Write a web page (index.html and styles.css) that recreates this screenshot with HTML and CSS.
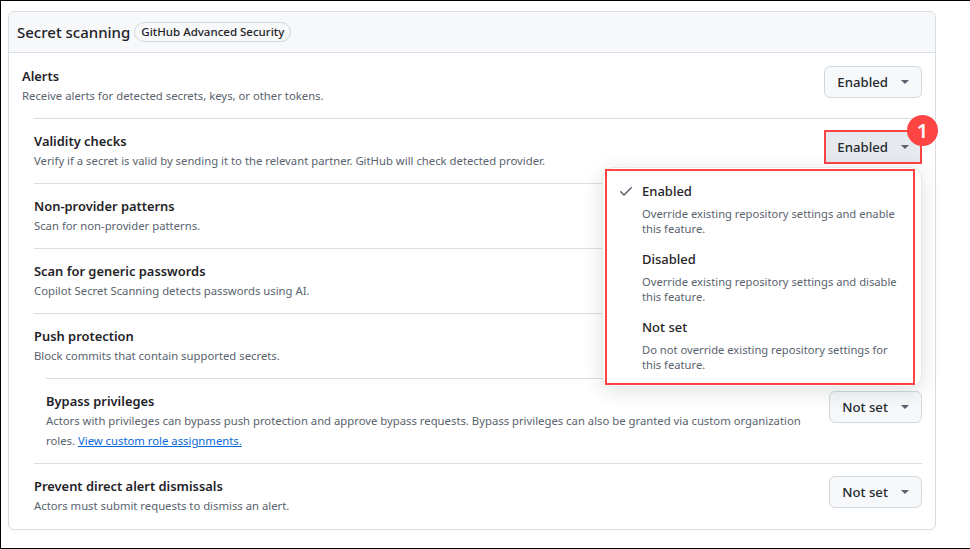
FILE: index.html
```html
<!DOCTYPE html>
<html>
<head>
  <title>Secret scanning</title>
  <link rel="stylesheet" href="styles.css">
</head>
<body>
  <div class="frame">
    <div class="card">
      <div class="card-head">
        <h2>Secret scanning</h2>
        <span class="pill">GitHub Advanced Security</span>
      </div>
      <div class="row">
        <div class="text">
          <h3>Alerts</h3>
          <p>Receive alerts for detected secrets, keys, or other tokens.</p>
        </div>
        <button class="btn">Enabled <span class="caret"></span></button>
      </div>
      <div class="indent">
        <div class="row line">
          <div class="text">
            <h3>Validity checks</h3>
            <p>Verify if a secret is valid by sending it to the relevant partner. GitHub will check detected provider.</p>
          </div>
          <div class="drop">
            <button class="btn open">Enabled <span class="caret"></span></button>
            <span class="step">1</span>
            <div class="menu">
              <div class="menu-mark">
                <div class="item">
                  <svg class="check" viewBox="0 0 16 16" width="16" height="16"><path d="M13.78 4.22a.75.75 0 0 1 0 1.06l-7.25 7.25a.75.75 0 0 1-1.06 0L2.22 9.28a.75.75 0 0 1 1.06-1.06L6 10.94l6.72-6.72a.75.75 0 0 1 1.06 0Z"/></svg>
                  <h4>Enabled</h4>
                  <p>Override existing repository settings and enable this feature.</p>
                </div>
                <div class="item">
                  <h4>Disabled</h4>
                  <p>Override existing repository settings and disable this feature.</p>
                </div>
                <div class="item">
                  <h4>Not set</h4>
                  <p>Do not override existing repository settings for this feature.</p>
                </div>
              </div>
            </div>
          </div>
        </div>
        <div class="row line">
          <div class="text">
            <h3>Non-provider patterns</h3>
            <p>Scan for non-provider patterns.</p>
          </div>
        </div>
        <div class="row line">
          <div class="text">
            <h3>Scan for generic passwords</h3>
            <p>Copilot Secret Scanning detects passwords using AI.</p>
          </div>
        </div>
        <div class="row line">
          <div class="text">
            <h3>Push protection</h3>
            <p>Block commits that contain supported secrets.</p>
          </div>
        </div>
        <div class="indent">
          <div class="row line">
            <div class="text">
              <h3>Bypass privileges</h3>
              <p>Actors with privileges can bypass push protection and approve bypass requests. Bypass privileges can also be granted via custom organization roles. <a href="#">View custom role assignments.</a></p>
            </div>
            <button class="btn">Not set <span class="caret"></span></button>
          </div>
        </div>
        <div class="row line">
          <div class="text">
            <h3>Prevent direct alert dismissals</h3>
            <p>Actors must submit requests to dismiss an alert.</p>
          </div>
          <button class="btn">Not set <span class="caret"></span></button>
        </div>
      </div>
    </div>
  </div>
</body>
</html>
```

FILE: styles.css
```css
* {
  box-sizing: border-box;
}
html, body {
  margin: 0;
  padding: 0;
  height: 100%;
  overflow: hidden;
}
body {
  font-family: "Noto Sans", "Open Sans", sans-serif;
  color: #1f2328;
  background: #fff;
}
.frame {
  height: 549px;
  border: 1px solid #000;
  border-right: 0;
  padding: 10px 34px 0 7px;
}
.card {
  height: 519px;
  border: 1px solid #d8dee4;
  border-radius: 6px;
  padding-right: 13px;
}
.card-head {
  display: flex;
  align-items: center;
  gap: 4px;
  height: 41px;
  margin-right: -13px;
  padding-left: 8px;
  background: #f6f8fa;
  border-bottom: 1px solid #d8dee4;
  border-radius: 6px 6px 0 0;
}
.card-head h2 {
  margin: 0;
  font-size: 15px;
  font-weight: 500;
}
.pill {
  height: 20px;
  padding: 0 6px;
  border: 1px solid #d1d9e0;
  border-radius: 10px;
  font-size: 11.5px;
  font-weight: 500;
  line-height: 18px;
}
.row {
  display: flex;
  justify-content: space-between;
  align-items: flex-start;
  padding: 13px 0 12px 13px;
}
.indent {
  margin-left: 12px;
}
.line {
  border-top: 1px solid #d8dee4;
  padding: 12px 0;
  margin-left: 13px;
}
.indent .indent .line {
  margin-left: 12px;
}
.indent .indent {
  margin-left: 13px;
}
.text {
  flex: 1;
  padding-right: 28px;
}
h3 {
  margin: 0;
  font-size: 12.9px;
  font-weight: 600;
  line-height: 20px;
}
.text p {
  margin: 0;
  font-size: 11.3px;
  line-height: 20px;
  color: #59636e;
}
a {
  color: #0969da;
}
.btn {
  display: flex;
  align-items: center;
  gap: 13px;
  height: 32px;
  padding: 0 12px;
  border: 1px solid #d1d9e0;
  border-radius: 6px;
  background: #f6f8fa;
  font-family: inherit;
  font-size: 13.2px;
  font-weight: 500;
  color: #25292e;
}
.btn.open {
  height: 34px;
  margin-top: -1px;
  padding: 0 11px;
  background: #e6eaef;
  border: 2px solid #ff4444;
  border-radius: 0;
}
.caret {
  width: 0;
  height: 0;
  border: 4px solid transparent;
  border-top-color: #59636e;
  border-bottom: 0;
}
.drop {
  position: relative;
}
.step {
  position: absolute;
  top: -16px;
  right: -16px;
  width: 31px;
  height: 31px;
  border-radius: 50%;
  background: #ff4444;
  color: #fff;
  font-size: 20px;
  font-weight: 600;
  line-height: 31px;
  text-align: center;
}
.menu {
  position: absolute;
  top: 36px;
  right: 0;
  width: 320px;
  height: 220px;
  padding: 1px 6px 1px 2px;
  background: #fff;
  border: 1px solid #e4e8ec;
  border-radius: 12px;
  box-shadow: 0 4px 20px rgba(31, 35, 40, 0.14);
}
.menu-mark {
  height: 100%;
  border: 2px solid #ff4444;
  padding: 10px 12px 0 35px;
}
.item {
  position: relative;
  height: 68px;
}
.item h4 {
  margin: 0 0 5px;
  font-size: 13px;
  font-weight: 500;
  line-height: 20px;
}
.item p {
  margin: 0;
  font-size: 11.2px;
  line-height: 15px;
  color: #59636e;
}
.check {
  position: absolute;
  left: -24px;
  top: 2px;
  fill: #59636e;
}
```
